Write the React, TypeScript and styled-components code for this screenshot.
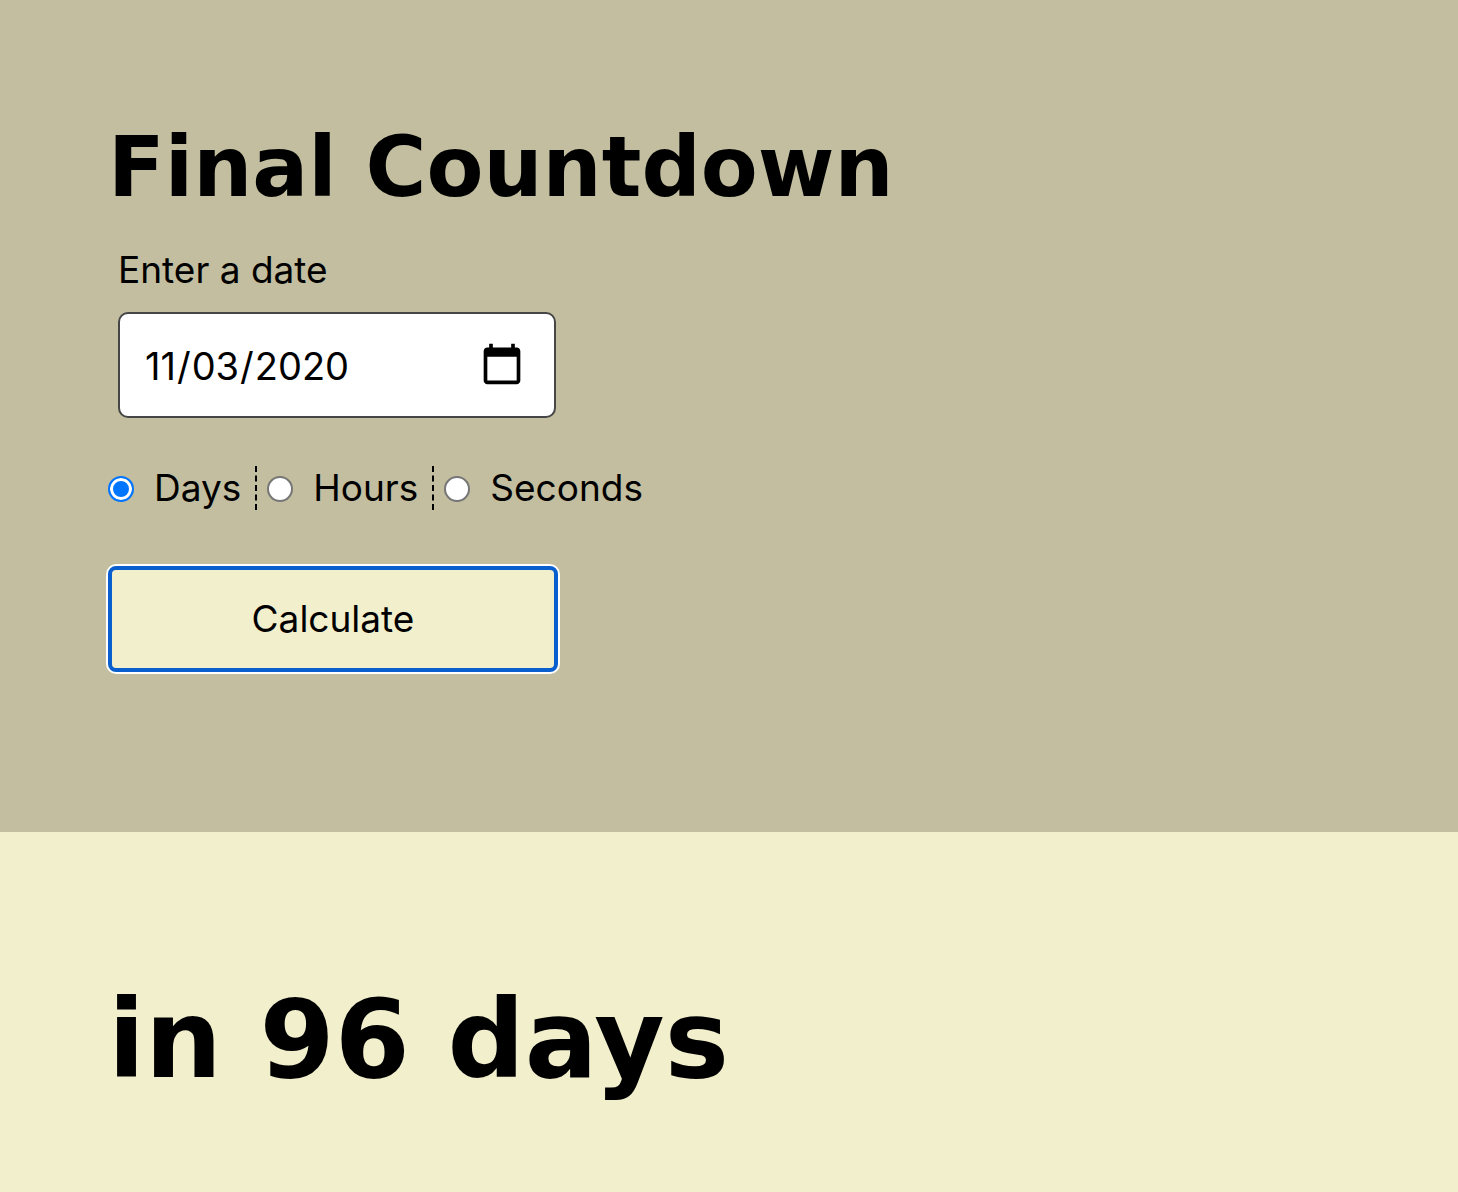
import React, { useState } from "react";
import styled, { createGlobalStyle } from "styled-components";

const GlobalStyle = createGlobalStyle`
  *, *::before, *::after { box-sizing: border-box; }
  html { background: #f2efcd; }
  body {
    margin: 0;
    color: #000;
    font-family: Inter, "Liberation Sans", sans-serif;
    font-size: 37px;
    line-height: 44px;
  }
`;

const Planner = styled.form`
  display: flex;
  flex-direction: column;
  align-items: flex-start;
  padding: 120px 108px 160px;
  background: #c2be9f;
`;

const Title = styled.h1`
  margin: 0 0 32px;
  font-family: "DejaVu Sans", sans-serif;
  font-size: 83px;
  line-height: 96px;
  font-weight: 700;
`;

const Field = styled.div`
  display: flex;
  flex-direction: column;
  gap: 20px;
  width: 448px;
  max-width: 100%;
  padding: 0 0 0 10px;
  margin-bottom: 48px;
`;

const DateInput = styled.input`
  width: 100%;
  height: 106px;
  padding: 2px 30px 0 24px;
  border: 2px solid #464646;
  border-radius: 10px;
  outline: none;
  background: #fff;
  color: #000;
  font: inherit;
  font-size: 38px;

  &::-webkit-calendar-picker-indicator {
    width: 44px;
    height: 44px;
    padding: 0;
    margin: 0 0 4px;
    background-size: 44px 44px;
  }
`;

const Units = styled.fieldset`
  display: flex;
  flex-wrap: wrap;
  gap: 10px;
  margin: 0 0 56px;
  padding: 0;
  border: 0;
`;

const Unit = styled.label`
  display: flex;
  align-items: center;
  gap: 20px;
  padding-right: 14px;
  border-right: 2px dashed #000;

  &:last-child {
    padding-right: 0;
    border-right: 0;
  }
`;

const Radio = styled.input`
  appearance: none;
  width: 26px;
  height: 26px;
  margin: 2px 0 0;
  border: 2px solid #767676;
  border-radius: 50%;
  background: #fff;

  &:checked {
    border-color: #0075ff;
    background: #0075ff;
    box-shadow: inset 0 0 0 3px #fff;
  }
`;

const Submit = styled.button`
  width: 450px;
  max-width: 100%;
  height: 106px;
  padding: 0;
  border: 4px solid #0a5fce;
  border-radius: 8px;
  outline: none;
  background: #f2efcd;
  box-shadow: 0 0 0 2px #fff;
  color: inherit;
  font: inherit;
`;

const Result = styled.section`
  padding: 144px 108px 80px;
  background: #f2efcd;
`;

const Answer = styled.p`
  margin: 0;
  font-family: "DejaVu Sans", sans-serif;
  font-size: 108px;
  line-height: 128px;
  font-weight: 700;
`;

const units = ["Days", "Hours", "Seconds"];

export default function App() {
  const [date, setDate] = useState("2020-11-03");
  const [unit, setUnit] = useState("Days");

  return (
    <>
      <GlobalStyle />
      <main>
        <Planner onSubmit={(event) => event.preventDefault()}>
          <Title>Final Countdown</Title>
          <Field>
            <label htmlFor="date">Enter a date</label>
            <DateInput
              id="date"
              type="date"
              value={date}
              onChange={(event) => setDate(event.target.value)}
            />
          </Field>
          <Units>
            {units.map((name) => (
              <Unit key={name}>
                <Radio
                  type="radio"
                  name="unit"
                  value={name}
                  checked={unit === name}
                  onChange={() => setUnit(name)}
                />
                {name}
              </Unit>
            ))}
          </Units>
          <Submit type="submit">Calculate</Submit>
        </Planner>
        <Result aria-live="polite">
          <Answer>in 96 days</Answer>
        </Result>
      </main>
    </>
  );
}
